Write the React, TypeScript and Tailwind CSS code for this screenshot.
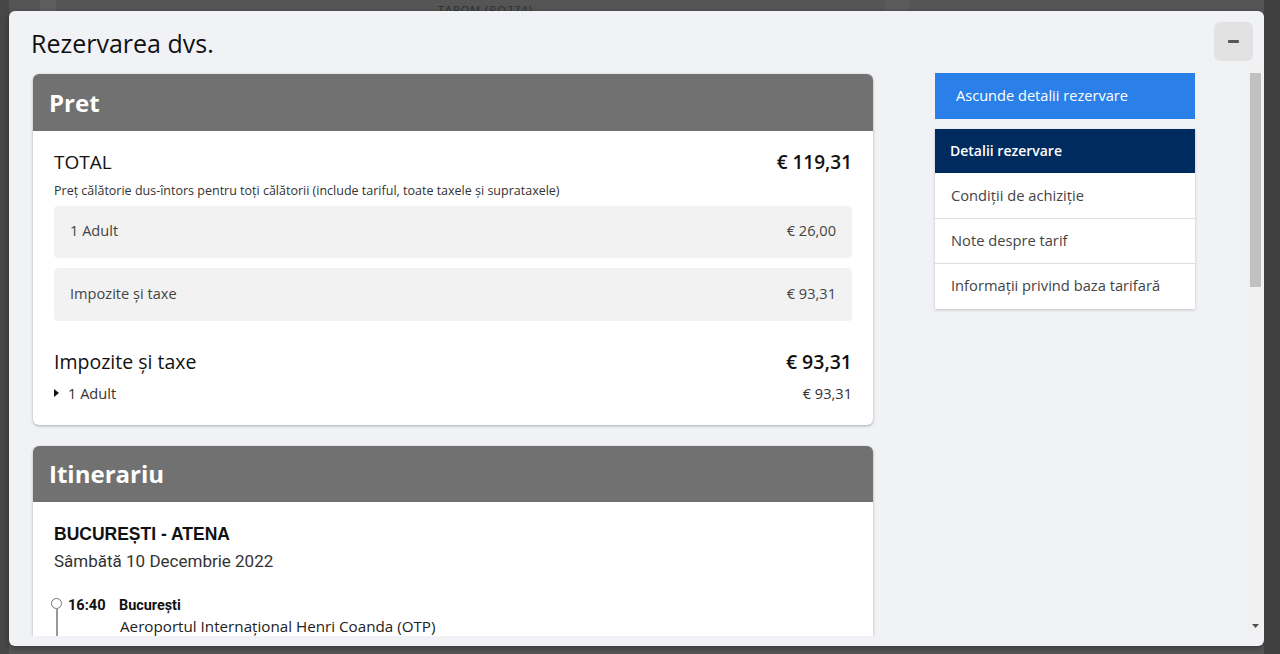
import React from "react";

const OS = "font-['Open_Sans',sans-serif]";

function PriceRow({ label, value, extra }: { label: string; value: string; extra?: string }) {
  return (
    <div className={`flex h-[52px] items-center justify-between rounded-[4px] bg-[#f2f2f2] px-[16px] pb-[2px] text-[14.6px] text-[#444] ${extra ?? ""}`}>
      <span>{label}</span>
      <span>{value}</span>
    </div>
  );
}

function CardHeader({ title, h }: { title: string; h: string }) {
  return (
    <div className={`flex ${h} items-center rounded-t-[6px] bg-[#717171] px-[16px]`}>
      <span className="text-[24px] font-bold leading-[32px] text-white">{title}</span>
    </div>
  );
}

export default function App() {
  return (
    <div className={`${OS} flex h-[654px] w-[1280px] flex-col overflow-hidden bg-[#555555]`}>
      <div className="flex h-[11px] shrink-0 overflow-hidden">
        <div className="w-[9px] bg-[#474747]" />
        <div className="w-[31px]" />
        <div className="w-[16px] bg-[#5e5e5e]" />
        <div className="w-[382px]" />
        <div className="mt-[3px] text-[11px] leading-[14px] tracking-[1px] text-[#2f2f2f]">TAROM (RO274)</div>
        <div className="flex-1" />
        <div className="mr-[355px] w-[24px] bg-[#5b5b5b]" />
        <div className="w-[16px] bg-[#3f3f3f]" />
      </div>
      <div className="flex flex-1">
        <div className="w-[9px] bg-[#474747]" />
        <div className="flex h-[635px] w-[1255px] flex-col overflow-hidden rounded-[6px] bg-[#f1f2f6] shadow-[0_2px_6px_rgba(0,0,0,0.35)]">
          {/* header */}
          <div className="flex h-[52px] shrink-0 items-start justify-between pl-[22px] pr-[11px] pt-[11px]">
            <h1 className="mt-[5px] text-[25px] font-normal leading-[32px] text-[#111]">Rezervarea dvs.</h1>
            <button className="flex h-[39px] w-[39px] items-center justify-center rounded-[6px] bg-[#e2e2e2]">
              <span className="block h-[3px] w-[11px] rounded-[1px] bg-[#555]" />
            </button>
          </div>
          {/* body */}
          <div className="flex h-[573px] shrink-0">
            <div className="flex flex-1 overflow-hidden">
              {/* left column */}
              <div className="ml-[24px] w-[840px] shrink-0 pt-[11px]">
                {/* Price card */}
                <div className="rounded-[6px] bg-white shadow-[0_1px_3px_rgba(0,0,0,0.3)]">
                  <CardHeader title="Pret" h="h-[57px]" />
                  <div className="px-[21px] pb-[22px] pt-[19px] text-[#111]">
                    <div className="flex items-center justify-between text-[19px] leading-[24px]">
                      <span>TOTAL</span>
                      <span className="font-semibold">€ 119,31</span>
                    </div>
                    <div className="mt-[9px] text-[12.5px] leading-[16px] text-[#333]">
                      Preț călătorie dus-întors pentru toți călătorii (include tariful, toate taxele și suprataxele)
                    </div>
                    <PriceRow label="1 Adult" value="€ 26,00" extra="mt-[7px]" />
                    <PriceRow label="Impozite și taxe" value="€ 93,31" extra="mt-[10px] h-[53px]" />
                    <div className="mt-[29px] flex items-center justify-between text-[19.5px] leading-[24px]">
                      <span>Impozite și taxe</span>
                      <span className="font-semibold">€ 93,31</span>
                    </div>
                    <div className="mt-[9px] flex items-center justify-between text-[14.6px] leading-[20px] text-[#333]">
                      <span className="flex items-center">
                        <svg width="5" height="8" viewBox="0 0 5 8" className="mr-[9px]">
                          <path d="M0 0 L5 4 L0 8 Z" fill="#111" />
                        </svg>
                        1 Adult
                      </span>
                      <span>€ 93,31</span>
                    </div>
                  </div>
                </div>
                {/* Itinerary card */}
                <div className="mt-[21px] rounded-[6px] bg-white shadow-[0_1px_3px_rgba(0,0,0,0.3)]">
                  <CardHeader title="Itinerariu" h="h-[56px]" />
                  <div className="px-[21px] pt-[20px]">
                    <div className="font-['Liberation_Sans',Arial,sans-serif] text-[17.5px] font-bold leading-[24px] text-[#111]">
                      BUCUREȘTI - ATENA
                    </div>
                    <div className="mt-[3px] font-['Roboto',sans-serif] text-[17px] font-normal leading-[24px] text-[#333]">
                      Sâmbătă 10 Decembrie 2022
                    </div>
                    <div className="ml-[-3px] mt-[21px] flex">
                      <div className="flex w-[11px] flex-col items-center pt-[4px]">
                        <span className="block h-[11px] w-[11px] rounded-full border-[1.5px] border-[#777]" />
                        <span className="block h-[40px] w-[2px] bg-[#999]" />
                      </div>
                      <div className="ml-[6px]">
                        <div className="flex items-baseline pt-[1px] font-['Roboto',sans-serif] font-bold leading-[20px] text-[#111]">
                          <span className="w-[51px] text-[14.6px]">16:40</span>
                          <span className="text-[14.4px]">București</span>
                        </div>
                        <div className="ml-[52px] text-[15.2px] leading-[20px] text-[#222]">
                          Aeroportul Internațional Henri Coanda (OTP)
                        </div>
                      </div>
                    </div>
                  </div>
                </div>
              </div>
              {/* right column */}
              <div className="ml-[62px] w-[260px] shrink-0 pt-[10px]">
                <button className="flex h-[46px] w-full items-center bg-[#2b7fe9] pl-[21px] text-left text-[14.6px] text-white">
                  Ascunde detalii rezervare
                </button>
                <div className="mt-[10px] bg-white text-[14.7px] text-[#444] shadow-[0_1px_3px_rgba(0,0,0,0.2)]">
                  <div className="flex h-[44px] items-center bg-[#002b5e] pb-[1px] pl-[15px] text-[14px] font-semibold text-white">Detalii rezervare</div>
                  <div className="flex h-[45px] items-center pb-[1px] pl-[16px]">Condiții de achiziție</div>
                  <div className="flex h-[45px] items-center border-t border-[#dddddd] pb-[2px] pl-[16px]">Note despre tarif</div>
                  <div className="flex h-[46px] items-center border-t border-[#dddddd] pb-[3px] pl-[16px]">Informații privind baza tarifară</div>
                </div>
              </div>
            </div>
            {/* scrollbar */}
            <div className="mr-[2px] flex w-[14px] shrink-0 flex-col bg-[#f1f1f1]">
              <div className="mx-auto mt-[10px] h-[214px] w-[11px] bg-[#c1c1c1]" />
              <div className="flex-1" />
              <div className="mb-[8px] flex justify-center">
                <svg width="7" height="4" viewBox="0 0 7 4">
                  <path d="M0 0 L7 0 L3.5 4 Z" fill="#505050" />
                </svg>
              </div>
            </div>
          </div>
        </div>
        <div className="flex-1 bg-[#3f3f3f]" />
      </div>
    </div>
  );
}
